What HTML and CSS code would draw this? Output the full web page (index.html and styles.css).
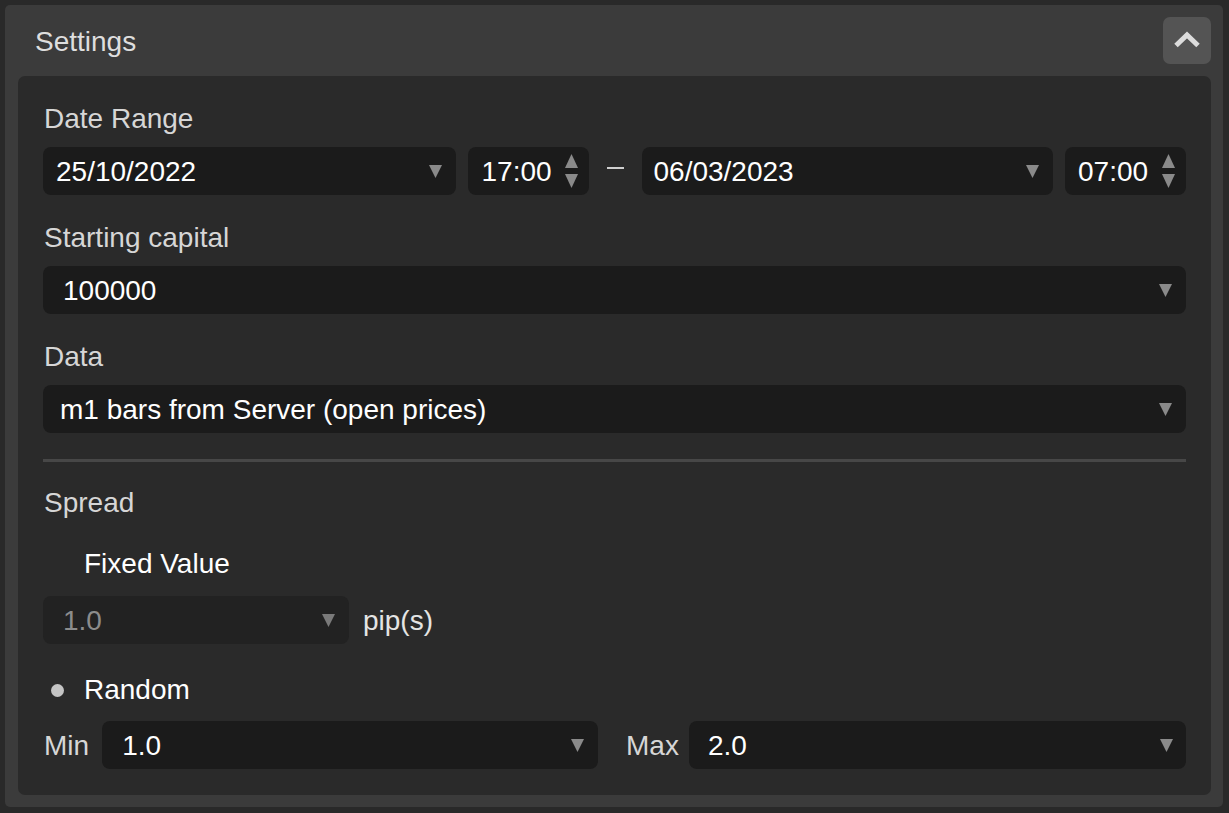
FILE: index.html
```html
<!DOCTYPE html>
<html>
<head>
<meta charset="utf-8">
<link rel="stylesheet" href="styles.css">
</head>
<body>
<div class="panel">
  <div class="header">
    <div class="title">Settings</div>
    <div class="collapse">
      <svg width="26" height="17" viewBox="0 0 26 17"><polyline points="2,14.5 13,4 24,14.5" fill="none" stroke="#dcdcdc" stroke-width="5"/></svg>
    </div>
  </div>
  <div class="body">
    <div class="label">Date Range</div>
    <div class="row dates">
      <div class="field date pad-s"><span class="val">25/10/2022</span><span class="caret"><svg width="13" height="13" viewBox="0 0 13 13"><polygon points="0,0 13,0 6.5,13" fill="#8a8a8a"/></svg></span></div>
      <div class="field time"><span class="val">17:00</span><span class="spin"><svg width="13" height="34" viewBox="0 0 13 34"><polygon points="6.5,0 13,14 0,14" fill="#8a8a8a"/><polygon points="0,20 13,20 6.5,34" fill="#8a8a8a"/></svg></span></div>
      <div class="dash"><span></span></div>
      <div class="field date pad-xs"><span class="val">06/03/2023</span><span class="caret"><svg width="13" height="13" viewBox="0 0 13 13"><polygon points="0,0 13,0 6.5,13" fill="#8a8a8a"/></svg></span></div>
      <div class="field time pad-xs"><span class="val">07:00</span><span class="spin"><svg width="13" height="34" viewBox="0 0 13 34"><polygon points="6.5,0 13,14 0,14" fill="#8a8a8a"/><polygon points="0,20 13,20 6.5,34" fill="#8a8a8a"/></svg></span></div>
    </div>

    <div class="label gap">Starting capital</div>
    <div class="field pad-l"><span class="val">100000</span><span class="caret"><svg width="13" height="13" viewBox="0 0 13 13"><polygon points="0,0 13,0 6.5,13" fill="#8a8a8a"/></svg></span></div>

    <div class="label gap">Data</div>
    <div class="field pad-m"><span class="val">m1 bars from Server (open prices)</span><span class="caret"><svg width="13" height="13" viewBox="0 0 13 13"><polygon points="0,0 13,0 6.5,13" fill="#8a8a8a"/></svg></span></div>

    <div class="divider"></div>

    <div class="label spread">Spread</div>

    <div class="option fixed"><span class="radio"></span><span class="opt-text">Fixed Value</span></div>
    <div class="row fixed-row">
      <div class="field disabled pad-l"><span class="val">1.0</span><span class="caret"><svg width="13" height="13" viewBox="0 0 13 13"><polygon points="0,0 13,0 6.5,13" fill="#7a7a7a"/></svg></span></div>
      <span class="unit">pip(s)</span>
    </div>

    <div class="option random"><span class="radio checked"></span><span class="opt-text">Random</span></div>
    <div class="minmax">
      <div class="half">
        <span class="mlabel">Min</span>
        <div class="field pad-l grow"><span class="val">1.0</span><span class="caret"><svg width="13" height="13" viewBox="0 0 13 13"><polygon points="0,0 13,0 6.5,13" fill="#8a8a8a"/></svg></span></div>
      </div>
      <div class="half">
        <span class="mlabel">Max</span>
        <div class="field pad-l grow"><span class="val">2.0</span><span class="caret"><svg width="13" height="13" viewBox="0 0 13 13"><polygon points="0,0 13,0 6.5,13" fill="#8a8a8a"/></svg></span></div>
      </div>
    </div>
  </div>
</div>
</body>
</html>
```

FILE: styles.css
```css
html, body {
  margin: 0;
  padding: 0;
  background: #292929;
}
body {
  font-family: "Liberation Sans", Arial, sans-serif;
  font-size: 28px;
  line-height: 32px;
  color: #d6d6d6;
}
.panel {
  margin: 5px 6px 6px 5px;
  height: 802px;
  box-sizing: border-box;
  background: #3b3b3b;
  border-radius: 5px;
  padding: 0 12px 12px 13px;
  display: flex;
  flex-direction: column;
}
.header {
  height: 71px;
  display: flex;
  align-items: center;
  justify-content: space-between;
  flex: none;
}
.title {
  padding-left: 17px;
  padding-top: 2px;
  color: #dedede;
}
.collapse {
  width: 48px;
  height: 47px;
  border-radius: 7px;
  background: #545454;
  display: flex;
  align-items: center;
  justify-content: center;
  margin-top: 0;
}
.collapse svg {
  display: block;
  margin-top: -2px;
}
.body {
  flex: 1;
  background: #2a2a2a;
  border-radius: 7px;
  padding: 26px 25px 26px 25px;
  display: flex;
  flex-direction: column;
}
.label {
  padding-left: 1px;
  padding-top: 1px;
  margin-bottom: 12px;
}
.label.gap {
  margin-top: 26px;
}
.row {
  display: flex;
  align-items: center;
}
.field {
  height: 48px;
  box-sizing: border-box;
  background: #1b1b1b;
  border-radius: 8px;
  display: flex;
  align-items: center;
  justify-content: space-between;
  padding: 0 14px 0 13px;
  color: #ffffff;
}
.field .val {
  white-space: nowrap;
  padding-top: 2px;
}
.caret svg, .spin svg {
  display: block;
}
.pad-s { padding-left: 13px; }
.pad-xs { padding-left: 12px; }
.pad-m { padding-left: 17px; }
.pad-l { padding-left: 20px; }
.dates .date {
  flex: 1;
}
.dates .time {
  width: 121px;
  flex: none;
  padding-left: 14px;
  padding-right: 11px;
}
.dates .time.pad-xs {
  padding-left: 13px;
}
.dates .field + .field {
  margin-left: 12px;
}
.dates .dash + .field {
  margin-left: 0;
}
.dash {
  width: 53px;
  flex: none;
  display: flex;
  justify-content: center;
}
.dash span {
  display: block;
  width: 17px;
  height: 2px;
  background: #cfcfcf;
  margin-top: -4px;
  margin-left: 1px;
}
.divider {
  margin-top: 26px;
  height: 3px;
  background: #474747;
}
.label.spread {
  margin-top: 24px;
  margin-bottom: 0;
}
.option {
  display: flex;
  align-items: center;
  color: #ffffff;
  padding-top: 1px;
}
.option.fixed {
  margin-top: 28px;
  margin-bottom: 16px;
}
.option.random {
  margin-top: 29px;
  margin-bottom: 15px;
}
.radio {
  width: 13px;
  height: 13px;
  border-radius: 50%;
  margin-left: 8px;
  margin-right: 21px;
  flex: none;
}
.radio.checked {
  background: #c4c4c4;
}
.opt-text {
  margin-left: -1px;
}
.fixed-row .field {
  width: 306px;
}
.field.disabled {
  background: #222222;
  color: #8c8c8c;
}
.unit {
  margin-left: 14px;
  color: #e4e4e4;
  padding-top: 2px;
}
.minmax {
  display: flex;
  gap: 27px;
}
.half {
  display: flex;
  align-items: center;
  flex: 1;
}
.half:first-child {
  flex: 0 0 555px;
}
.mlabel {
  padding-left: 1px;
  padding-top: 2px;
  margin-right: 13px;
  color: #d6d6d6;
}
.half:last-child .mlabel {
  margin-right: 10px;
}
.grow {
  flex: 1;
}
.half:last-child .grow {
  padding-left: 19px;
  padding-right: 13px;
}
```
